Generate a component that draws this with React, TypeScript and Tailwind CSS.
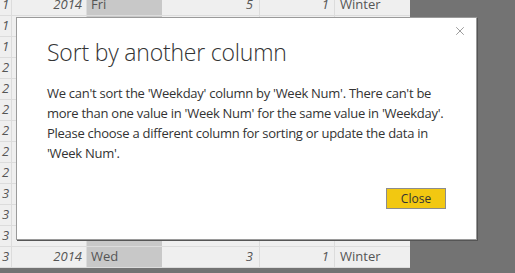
import { X } from 'lucide-react';

const rows = [
  { wk: 1, day: 'Fri', n: 5 },
  { wk: 1, day: 'Sat', n: 6 },
  { wk: 1, day: 'Sun', n: 7 },
  { wk: 2, day: 'Mon', n: 1 },
  { wk: 2, day: 'Tue', n: 2 },
  { wk: 2, day: 'Wed', n: 3 },
  { wk: 2, day: 'Thu', n: 4 },
  { wk: 2, day: 'Fri', n: 5 },
  { wk: 2, day: 'Sat', n: 6 },
  { wk: 3, day: 'Sun', n: 7 },
  { wk: 3, day: 'Mon', n: 1 },
  { wk: 3, day: 'Tue', n: 2 },
  { wk: 3, day: 'Wed', n: 3 },
];

function DataGrid() {
  return (
    <div className="-mt-[5px] text-[13px] text-[#555]">
      {rows.map((r, i) => (
        <div key={i} className="flex h-[21px] items-center border-b border-[#dcdcdc]">
          <div className="w-[12px] h-full flex items-center pl-[2px] italic border-r border-[#dcdcdc]">{r.wk}</div>
          <div className="w-[75px] h-full flex items-center justify-end pr-[4px] italic border-r border-[#dcdcdc]">2014</div>
          <div className="w-[75px] h-full flex items-center pl-[4px] bg-[#c8c8c8]">{r.day}</div>
          <div className="w-[98px] h-full flex items-center justify-end pr-[6px] italic border-r border-[#dcdcdc]">{r.n}</div>
          <div className="w-[75px] h-full flex items-center justify-end pr-[5px] italic border-r border-[#dcdcdc]">1</div>
          <div className="w-[75px] h-full flex items-center pl-[5px]">Winter</div>
        </div>
      ))}
    </div>
  );
}

export default function App() {
  return (
    <div className="relative w-[515px] h-[273px] overflow-hidden bg-[#737373] font-['Open_Sans','Liberation_Sans',sans-serif]">
      <div className="w-[410px] h-full bg-[#efefef]">
        <DataGrid />
      </div>

      {/* modal dialog over the grid */}
      <div className="absolute left-[16px] top-[17px] w-[461px] h-[223px] bg-white border border-[#9a9a9a] shadow-[1px_1px_0_#555]">
        <button className="absolute right-[9px] top-[6px] text-[#777]">
          <X className="w-[14px] h-[14px]" strokeWidth={1.25} />
        </button>
        <div className="pl-[30px] pr-[20px] pt-[18px]">
          <h2 className="text-[23px] font-light text-[#333] leading-[32px] tracking-[-0.2px]">Sort by another column</h2>
          <p className="mt-[15px] text-[13px] leading-[20px] tracking-[-0.27px] text-[#333]">
            We can't sort the 'Weekday' column by 'Week Num'. There can't be more than one value in 'Week Num' for the
            same value in 'Weekday'. Please choose a different column for sorting or update the data in 'Week Num'.
          </p>
          <div className="flex justify-end mt-[25px] pr-[10px]">
            <button className="w-[60px] h-[21px] bg-[#f2c811] border border-[#8c8c8c] text-[12px] text-[#333]">Close</button>
          </div>
        </div>
      </div>
    </div>
  );
}
